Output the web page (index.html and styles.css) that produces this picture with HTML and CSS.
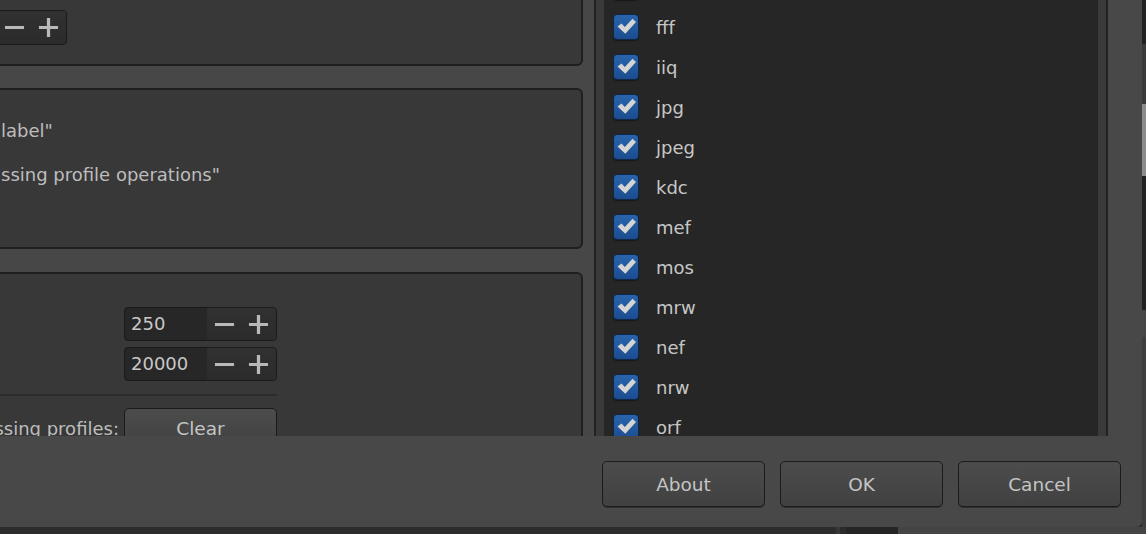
FILE: index.html
```html
<!DOCTYPE html>
<html lang="en">
  <head>
    <meta charset="UTF-8" />
    <title>Preferences</title>
    <link rel="stylesheet" href="styles.css">
  </head>
  <body>
    <div class="desktop">
      <div class="dialog">
        <div class="dialog-body">
          <!-- Left: settings panel (scrolled) -->
          <div class="settings">
            <div class="group group-top">
              <div class="spin spin-offset">
                <span class="spin-value"></span>
                <span class="spin-buttons">
                  <span class="spin-btn"><svg viewBox="0 0 22 22"><path d="M1 11h20" /></svg></span>
                  <span class="spin-btn"><svg viewBox="0 0 22 22"><path d="M1 11h20M11 1v20" /></svg></span>
                </span>
              </div>
            </div>

            <div class="group group-text">
              <div class="line">label"</div>
              <div class="line">ssing profile operations"</div>
            </div>

            <div class="group group-form">
              <span class="form-label"></span>
              <div class="spin">
                <span class="spin-value">250</span>
                <span class="spin-buttons">
                  <span class="spin-btn"><svg viewBox="0 0 22 22"><path d="M1 11h20" /></svg></span>
                  <span class="spin-btn"><svg viewBox="0 0 22 22"><path d="M1 11h20M11 1v20" /></svg></span>
                </span>
              </div>
              <span class="form-label"></span>
              <div class="spin">
                <span class="spin-value">20000</span>
                <span class="spin-buttons">
                  <span class="spin-btn"><svg viewBox="0 0 22 22"><path d="M1 11h20" /></svg></span>
                  <span class="spin-btn"><svg viewBox="0 0 22 22"><path d="M1 11h20M11 1v20" /></svg></span>
                </span>
              </div>
              <div class="separator"></div>
              <span class="form-label">ssing profiles:</span>
              <button class="btn btn-small">Clear</button>
            </div>
          </div>

          <!-- Right: file extensions list -->
          <div class="formats">
            <div class="format-list">
              <div class="item"><span class="box"><svg viewBox="0 0 26 26"><path d="M4.5 12.5 8.5 9.5 11.8 13 19.5 4.8 23 8 12.3 19.8Z" /></svg></span></div>
              <div class="item"><span class="box"><svg viewBox="0 0 26 26"><path d="M4.5 12.5 8.5 9.5 11.8 13 19.5 4.8 23 8 12.3 19.8Z" /></svg></span>fff</div>
              <div class="item"><span class="box"><svg viewBox="0 0 26 26"><path d="M4.5 12.5 8.5 9.5 11.8 13 19.5 4.8 23 8 12.3 19.8Z" /></svg></span>iiq</div>
              <div class="item"><span class="box"><svg viewBox="0 0 26 26"><path d="M4.5 12.5 8.5 9.5 11.8 13 19.5 4.8 23 8 12.3 19.8Z" /></svg></span>jpg</div>
              <div class="item"><span class="box"><svg viewBox="0 0 26 26"><path d="M4.5 12.5 8.5 9.5 11.8 13 19.5 4.8 23 8 12.3 19.8Z" /></svg></span>jpeg</div>
              <div class="item"><span class="box"><svg viewBox="0 0 26 26"><path d="M4.5 12.5 8.5 9.5 11.8 13 19.5 4.8 23 8 12.3 19.8Z" /></svg></span>kdc</div>
              <div class="item"><span class="box"><svg viewBox="0 0 26 26"><path d="M4.5 12.5 8.5 9.5 11.8 13 19.5 4.8 23 8 12.3 19.8Z" /></svg></span>mef</div>
              <div class="item"><span class="box"><svg viewBox="0 0 26 26"><path d="M4.5 12.5 8.5 9.5 11.8 13 19.5 4.8 23 8 12.3 19.8Z" /></svg></span>mos</div>
              <div class="item"><span class="box"><svg viewBox="0 0 26 26"><path d="M4.5 12.5 8.5 9.5 11.8 13 19.5 4.8 23 8 12.3 19.8Z" /></svg></span>mrw</div>
              <div class="item"><span class="box"><svg viewBox="0 0 26 26"><path d="M4.5 12.5 8.5 9.5 11.8 13 19.5 4.8 23 8 12.3 19.8Z" /></svg></span>nef</div>
              <div class="item"><span class="box"><svg viewBox="0 0 26 26"><path d="M4.5 12.5 8.5 9.5 11.8 13 19.5 4.8 23 8 12.3 19.8Z" /></svg></span>nrw</div>
              <div class="item"><span class="box"><svg viewBox="0 0 26 26"><path d="M4.5 12.5 8.5 9.5 11.8 13 19.5 4.8 23 8 12.3 19.8Z" /></svg></span>orf</div>
            </div>
          </div>
        </div>

        <div class="dialog-buttons">
          <button class="btn">About</button>
          <button class="btn">OK</button>
          <button class="btn">Cancel</button>
        </div>
      </div>

      <!-- window behind the dialog -->
      <div class="edge">
        <span class="edge-dark" style="height: 44px"></span>
        <span class="edge-track" style="height: 60px"></span>
        <span class="edge-thumb" style="height: 72px"></span>
        <span class="edge-dark" style="height: 134px"></span>
        <span class="edge-light" style="height: 27px"></span>
        <span class="edge-mid" style="flex: 1"></span>
      </div>
    </div>
    <div class="taskbar">
      <span class="tb-a" style="width: 836px"></span>
      <span class="tb-b" style="width: 4px"></span>
      <span class="tb-a" style="width: 6px"></span>
      <span class="tb-c" style="width: 52px"></span>
      <span class="tb-d" style="flex: 1"></span>
    </div>
  </body>
</html>
```

FILE: styles.css
```css
body {
  margin: 0;
  width: 1146px;
  height: 534px;
  overflow: hidden;
  background-color: #2c2c2c;
  font-family: "DejaVu Sans", sans-serif;
  font-size: 18px;
  color: #c2c2c2;
}
.desktop {
  display: flex;
  height: 527px;
}
.dialog {
  width: 1142px;
  flex: none;
  display: flex;
  flex-direction: column;
  background-color: #484848;
  border-bottom-right-radius: 6px;
  overflow: hidden;
}
.dialog-body {
  display: flex;
  height: 436px;
  flex: none;
}

/* Settings panel */
.settings {
  width: 594px;
  flex: none;
  background-color: #474747;
  overflow: hidden;
}
.group {
  margin: 0 11px 22px -10px;
  border: 2px solid #1f1f1f;
  border-radius: 6px;
  background-color: #383838;
}
.group-top {
  margin-top: -20px;
  padding: 28px 0 19px;
}
.group-text {
  padding: 19px 0 50px 9px;
}
.group-text .line {
  height: 44px;
  line-height: 44px;
  white-space: nowrap;
  color: #bdbdbd;
}
.group-form {
  margin-top: 23px;
  margin-bottom: 0;
  padding-top: 33px;
  display: grid;
  grid-template-columns: 127px 153px;
  column-gap: 5px;
  row-gap: 6px;
  align-items: start;
}
.form-label {
  white-space: nowrap;
  color: #bdbdbd;
  display: flex;
  justify-content: flex-end;
  overflow: hidden;
  padding-top: 10px;
}
.separator {
  grid-column: 1 / -1;
  height: 2px;
  margin: 7px 0 6px;
  background-color: #2b2b2b;
}

/* Spin box */
.spin {
  display: flex;
  width: 153px;
  height: 34px;
  box-sizing: border-box;
  border: 1.5px solid #1a1a1a;
  border-radius: 4px;
  background-color: #272727;
  overflow: hidden;
}
.spin-offset {
  margin-left: -78px;
  height: 35px;
}
.spin-value {
  flex: 1;
  padding-left: 6px;
  line-height: 31px;
  color: #c8c8c8;
}
.spin-buttons {
  display: flex;
  width: 69px;
  background: linear-gradient(#313131, #2b2b2b);
}
.spin-btn {
  flex: 1;
  display: flex;
  align-items: center;
  justify-content: center;
}
.spin-btn svg {
  width: 21px;
  height: 21px;
  stroke: #b9b9b9;
  stroke-width: 3.4;
  fill: none;
}

/* Push buttons */
.btn {
  width: 163px;
  height: 46px;
  box-sizing: border-box;
  border: 1.5px solid #1b1b1b;
  border-radius: 5px;
  background: linear-gradient(#4c4c4c, #414141);
  box-shadow: 0 1px 0 #303030;
  font-family: "DejaVu Sans", sans-serif;
  font-size: 18.5px;
  color: #c4c4c4;
  padding: 0;
}
.btn-small {
  width: 153px;
  height: 40px;
  padding-top: 0;
}

/* Formats list */
.formats {
  flex: none;
  width: 494px;
  padding: 0 8px;
  background-color: #3a3a3a;
  border-left: 2px solid #222;
  border-right: 2px solid #222;
}
.format-list {
  height: 100%;
  background-color: #262626;
  overflow: hidden;
}
.item {
  height: 40px;
  display: flex;
  align-items: center;
  gap: 17px;
  padding-left: 9px;
  color: #c6c6c6;
}
.item:first-child {
  margin-top: -33px;
}
.box {
  width: 26px;
  height: 26px;
  box-sizing: border-box;
  border: 1.5px solid #0e2748;
  border-radius: 4px;
  background: linear-gradient(#2a64ae, #1b4d90);
  box-shadow: 0 1px 1px rgba(0, 0, 0, 0.4);
  display: flex;
}
.box svg {
  width: 26px;
  height: 26px;
  margin: -1.5px;
  fill: #d4d4d4;
}

/* Dialog button row */
.dialog-buttons {
  flex: 1;
  display: flex;
  justify-content: flex-end;
  align-items: flex-start;
  gap: 15px;
  padding: 25px 21px 0 0;
}

/* Background window bits */
.edge {
  flex: 1;
  display: flex;
  flex-direction: column;
}
.edge-dark { background-color: #222; }
.edge-track { background-color: #3a3a3a; }
.edge-thumb { background-color: #8c8c8c; }
.edge-light { background-color: #474747; }
.edge-mid { background-color: #3e3e3e; }
.taskbar {
  display: flex;
  height: 7px;
}
.tb-a { background-color: #2c2c2c; }
.tb-b { background-color: #383838; }
.tb-c { background-color: #252525; }
.tb-d { background-color: #444; }
```
